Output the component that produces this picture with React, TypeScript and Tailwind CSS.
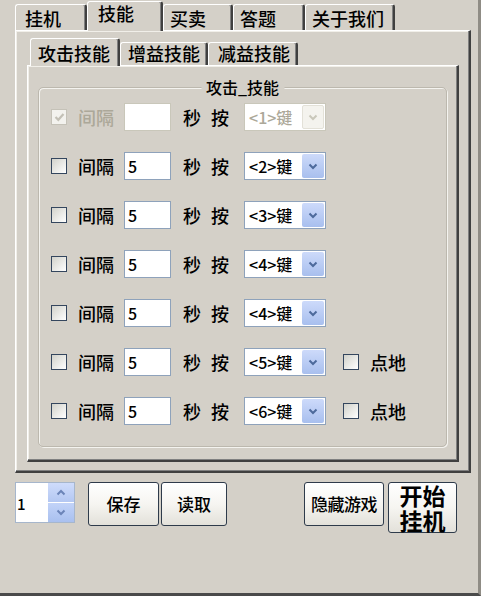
import React from 'react';

const edge =
  'border-t border-l border-t-white border-l-white border-r-2 border-b-2 border-r-[#404040] border-b-[#404040] shadow-[inset_-1px_-1px_0_#808080,inset_1px_1px_0_#f1efe9]';

function Tab({ label, active, w, pl, h, pt }: { label: string; active?: boolean; w: string; pl: string; h: string; pt: string }) {
  return (
    <div
      className={`${w} ${pl} ${h} ${pt} shrink-0 border-t border-l border-t-white border-l-white border-r-2 border-r-[#404040] rounded-t-[3px] shadow-[inset_-1px_0_0_#808080] leading-[18px] text-[18px] text-black ${
        active ? 'relative z-10 -mb-px bg-[#d4d0c8]' : ''
      }`}
    >
      {label}
    </div>
  );
}

function Chevron({ color, down = true }: { color: string; down?: boolean }) {
  return (
    <svg width="10" height="7" viewBox="0 0 10 7">
      <path d={down ? 'M1.5 1.5 L5 5 L8.5 1.5' : 'M1.5 5.5 L5 2 L8.5 5.5'} fill="none" stroke={color} strokeWidth="2" />
    </svg>
  );
}

function Check({ checked, disabled }: { checked?: boolean; disabled?: boolean }) {
  return (
    <div
      className={`w-[16px] h-[16px] shrink-0 border flex items-center justify-center ${
        disabled ? 'border-[#c5c2b8] bg-[#f3f2ee]' : 'border-[#34465e] bg-gradient-to-br from-[#d2d2cb] to-white'
      }`}
    >
      {checked && (
        <svg width="11" height="10" viewBox="0 0 11 10">
          <path d="M1.5 5 L4.3 7.8 L9.5 2" fill="none" stroke="#c3c0b6" strokeWidth="2.2" />
        </svg>
      )}
    </div>
  );
}

function Combo({ n, disabled }: { n: number; disabled?: boolean }) {
  return (
    <div
      className={`ml-[15px] w-[82px] h-[28px] border flex items-stretch bg-white ${
        disabled ? 'border-[#c9c7ba]' : 'border-[#8ea2bb]'
      }`}
    >
      <div className={`flex-1 flex items-center pl-[4px] text-[16px] ${disabled ? 'text-[#aca899]' : 'text-black'}`}>
        &lt;{n}&gt;键
      </div>
      <div
        className={`w-[22px] m-px flex items-center justify-center rounded-[2px] ${
          disabled ? 'bg-[#f4f3ee] border border-[#e3e1d8]' : 'bg-gradient-to-b from-[#cddafa] to-[#a8bfee]'
        }`}
      >
        <Chevron color={disabled ? '#c9c7ba' : '#4d6a9c'} />
      </div>
    </div>
  );
}

function SkillRow({ n, disabled, ground }: { n: number; disabled?: boolean; ground?: boolean }) {
  return (
    <div className="flex items-center h-[28px] text-[18px] leading-[18px]">
      <Check checked={disabled} disabled={disabled} />
      <span className={`ml-[11px] ${disabled ? 'text-[#aca899]' : 'text-black'}`}>间隔</span>
      <div
        className={`ml-[10px] w-[47px] h-[28px] shrink-0 border bg-white flex items-center pl-[3px] text-[16px] ${
          disabled ? 'border-[#c9c7ba]' : 'border-[#8ea2bb]'
        }`}
      >
        {disabled ? '' : '5'}
      </div>
      <span className="ml-[12px]">秒</span>
      <span className="ml-[10px]">按</span>
      <Combo n={n} disabled={disabled} />
      {ground && (
        <>
          <div className="ml-[17px]">
            <Check />
          </div>
          <span className="ml-[11px]">点地</span>
        </>
      )}
    </div>
  );
}

function Btn({ children, w, h, extra = '' }: { children: React.ReactNode; w: string; h: string; extra?: string }) {
  return (
    <div
      className={`${w} ${h} shrink-0 rounded-[3px] border border-[#2e3b4b] bg-gradient-to-b from-white via-[#f6f5f1] to-[#e3e1da] flex items-center justify-center text-black ${extra}`}
    >
      {children}
    </div>
  );
}

export default function App() {
  return (
    <div className="w-[481px] h-[596px] bg-[#d4d0c8] border-r-[3px] border-r-[#8f8c85] border-b-[3px] border-b-[#4a4a4a] pl-[15px] font-['Noto_Sans_CJK_SC',sans-serif] font-medium overflow-hidden">
      {/* outer tabs */}
      <div className="flex items-end h-[30px]">
        <Tab label="挂机" w="w-[72px]" pl="pl-[9px]" h="h-[26px]" pt="pt-[4px]" />
        <Tab label="技能" active w="w-[76px]" pl="pl-[10px]" h="h-[30px]" pt="pt-[2px]" />
        <Tab label="买卖" w="w-[70px]" pl="pl-[6px]" h="h-[26px]" pt="pt-[4px]" />
        <Tab label="答题" w="w-[72px]" pl="pl-[6px]" h="h-[26px]" pt="pt-[4px]" />
        <Tab label="关于我们" w="w-[90px]" pl="pl-[6px]" h="h-[26px]" pt="pt-[4px]" />
      </div>
      <div className={`w-[456px] h-[443px] ${edge} pl-[11px] pt-[6px]`}>
        {/* inner tabs */}
        <div className="flex items-end h-[28px] pl-[3px]">
          <Tab label="攻击技能" active w="w-[90px]" pl="pl-[7px]" h="h-[28px]" pt="pt-[5px]" />
          <Tab label="增益技能" w="w-[88px]" pl="pl-[7px]" h="h-[23px]" pt="pt-[1px]" />
          <Tab label="减益技能" w="w-[90px]" pl="pl-[9px]" h="h-[23px]" pt="pt-[1px]" />
        </div>
        <div className={`w-[432px] h-[397px] ${edge} pl-[10px] pt-[21px]`}>
          {/* group box */}
          <div className="relative w-[409px] h-[360px] rounded-[5px] border border-[#bcb8ae] shadow-[inset_1px_1px_0_#f4f3ef,1px_1px_0_#f4f3ef] pl-[12px] pt-[15px] flex flex-col gap-[21px]">
            <div className="absolute -top-[10px] left-1/2 -translate-x-1/2 bg-[#d4d0c8] px-[5px] text-[16px] leading-[18px] text-black">
              攻击_技能
            </div>
            <SkillRow n={1} disabled />
            <SkillRow n={2} />
            <SkillRow n={3} />
            <SkillRow n={4} />
            <SkillRow n={4} />
            <SkillRow n={5} ground />
            <SkillRow n={6} ground />
          </div>
        </div>
      </div>

      {/* bottom controls */}
      <div className="flex items-start mt-[9px]">
        <div className="w-[60px] h-[41px] border border-[#a6b6cc] bg-white flex">
          <div className="flex-1 text-[15px] leading-[15px] pt-[13px] pl-[1px] text-black">1</div>
          <div className="w-[26px] flex flex-col gap-px">
            <div className="flex-1 bg-gradient-to-b from-[#cfdcfb] to-[#b3c7f2] flex items-center justify-center">
              <Chevron color="#6b84b8" down={false} />
            </div>
            <div className="flex-1 bg-gradient-to-b from-[#c2d3f8] to-[#a9c0ef] flex items-center justify-center">
              <Chevron color="#6b84b8" />
            </div>
          </div>
        </div>
        <Btn w="w-[71px] ml-[13px]" h="h-[44px]" extra="text-[17px]">保存</Btn>
        <Btn w="w-[66px] ml-[2px]" h="h-[44px]" extra="text-[17px]">读取</Btn>
        <Btn w="w-[80px] ml-[77px]" h="h-[44px]" extra="text-[17px] tracking-[-0.5px]">隐藏游戏</Btn>
        <Btn w="w-[69px] ml-[4px]" h="h-[51px]" extra="text-[23px] leading-[25px] font-bold">
          <span className="text-center">
            开始
            <br />
            挂机
          </span>
        </Btn>
      </div>
    </div>
  );
}
